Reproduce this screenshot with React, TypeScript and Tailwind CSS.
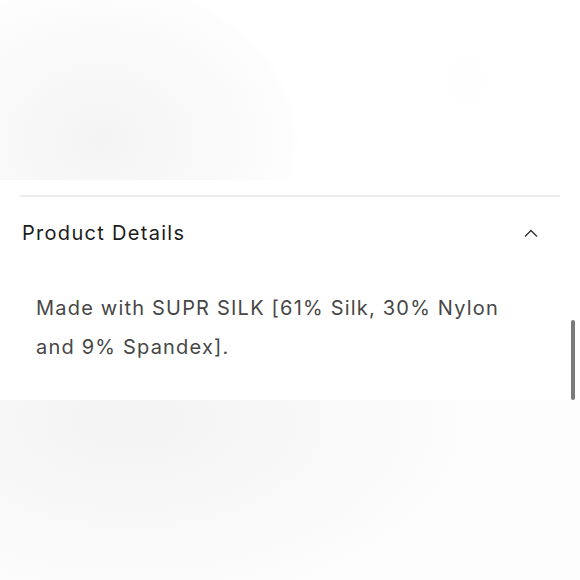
export default function App() {
  return (
    <div className="w-[580px] h-[580px] bg-white overflow-hidden flex flex-col font-['Inter',sans-serif]">
      {/* faded product image above */}
      <div className="h-[180px] bg-[radial-gradient(ellipse_200px_160px_at_100px_140px,#f4f4f4,#fafafa_65%,#fdfdfd_95%,transparent_100%),radial-gradient(ellipse_60px_80px_at_465px_80px,#fefefe,transparent)]" />
      <div className="px-5 pt-[15px]">
        <div className="h-[2px] bg-[#ececec]" />
        <div className="flex items-center justify-between pl-[2px] pr-[22px] pt-[22px]">
          <span className="text-[20px] leading-[28px] text-[#1c1c1c] tracking-[1.3px]">Product Details</span>
          <svg width="14" height="8" viewBox="0 0 14 8" fill="none" stroke="#333" strokeWidth="1.4">
            <path d="M1 7.5 L7 1.5 L13 7.5" />
          </svg>
        </div>
        <p className="pl-4 w-[504px] pt-[42px] text-[20px] leading-[39px] text-[#474747] tracking-[1.2px]">
          Made with SUPR SILK [61% Silk, 30% Nylon and 9% Spandex].
        </p>
      </div>
      <div className="flex-1 mt-[33px] bg-[radial-gradient(ellipse_360px_200px_at_130px_20px,#f3f3f3,#fafafa_70%,#fdfdfd_100%)]" />
      <div className="absolute left-[571px] top-[320px] w-[4px] h-[80px] rounded bg-[#7a7a7a]" />
    </div>
  );
}
